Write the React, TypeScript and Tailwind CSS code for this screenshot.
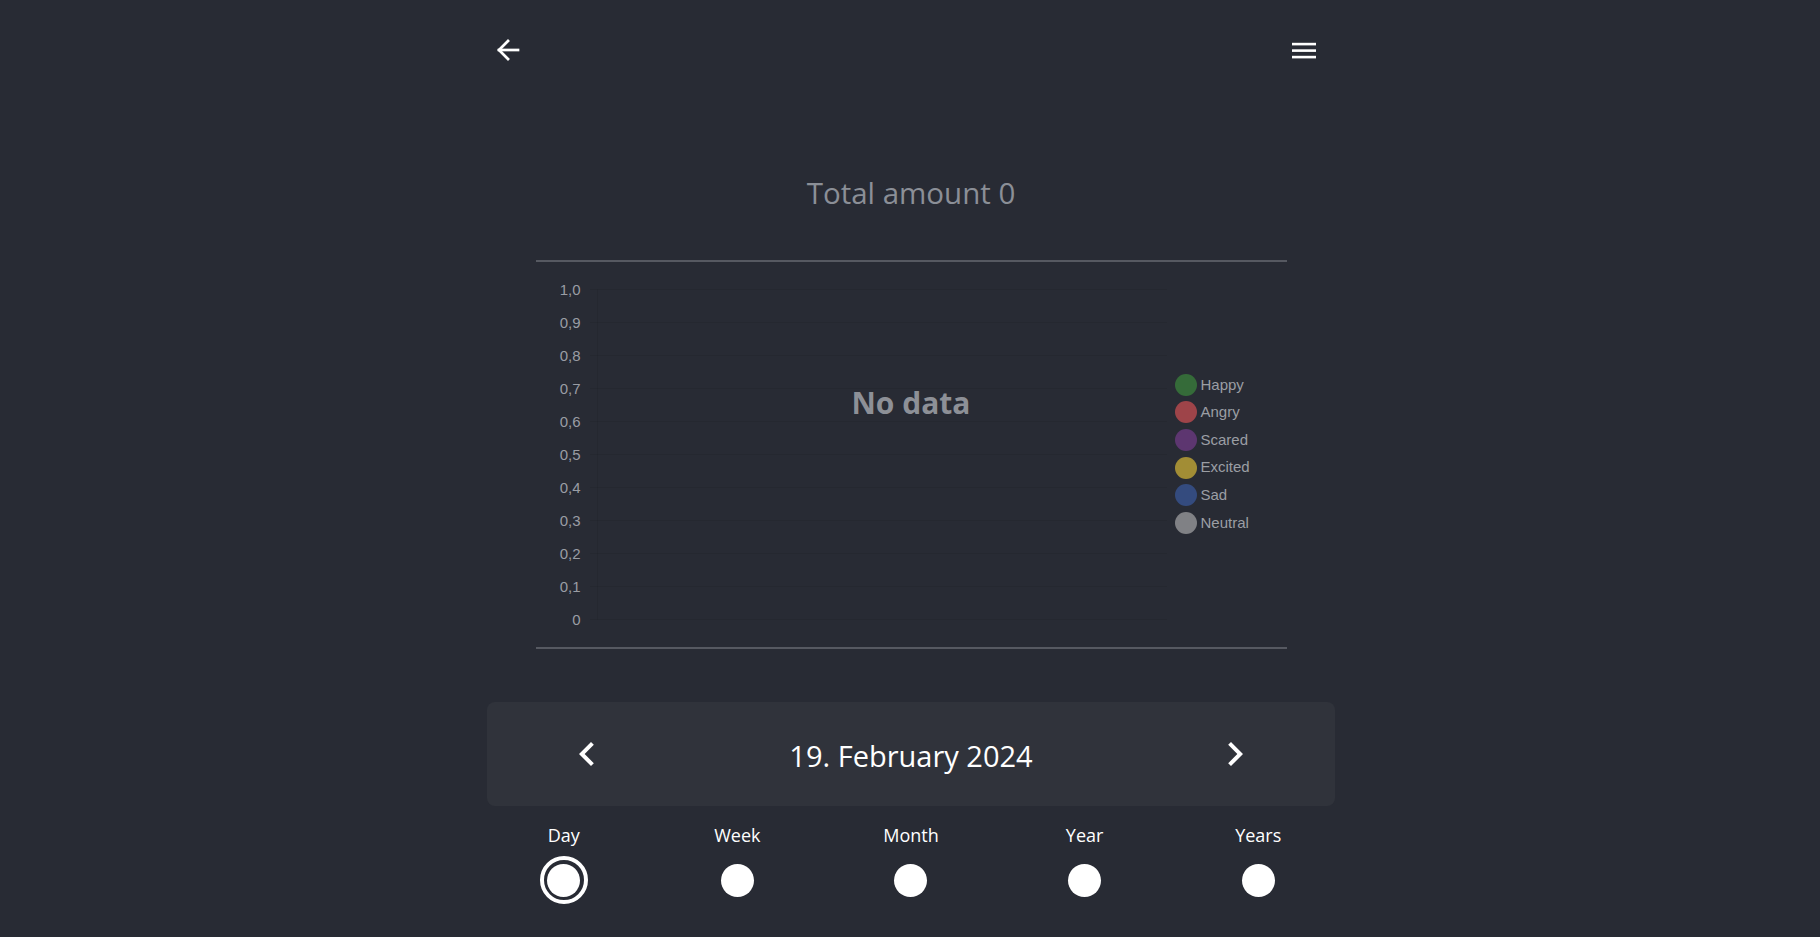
import React from "react";
import { MdChevronLeft, MdChevronRight } from "react-icons/md";

const yLabels = ["1,0", "0,9", "0,8", "0,7", "0,6", "0,5", "0,4", "0,3", "0,2", "0,1", "0"];
const legend = [
  { name: "Happy", color: "#356b39" },
  { name: "Angry", color: "#9e4449" },
  { name: "Scared", color: "#5d3670" },
  { name: "Excited", color: "#a28d35" },
  { name: "Sad", color: "#344b7e" },
  { name: "Neutral", color: "#808185" },
];
const periods = ["Day", "Week", "Month", "Year", "Years"];

export default function App() {
  return (
    <div className="min-h-screen bg-[#282b34] pl-[2px] font-['Open_Sans','Noto_Sans',sans-serif]">
      <div className="w-[848px] mx-auto">
        <header className="h-[100px] flex items-center justify-between">
          <button className="ml-[9px] text-white" aria-label="back">
            <svg width="24" height="22" viewBox="0 0 24 22" fill="none" stroke="white" strokeWidth="2.7" strokeLinecap="square">
              <path d="M22 11H3" />
              <path d="M12 2L3 11L12 20" strokeLinejoin="miter" />
            </svg>
          </button>
          <button className="mr-[19px]" aria-label="menu">
            <svg width="24" height="18" viewBox="0 0 24 18" fill="white">
              <rect x="0" y="1.8" width="24" height="2.6" />
              <rect x="0" y="8.3" width="24" height="2.6" />
              <rect x="0" y="14.8" width="24" height="2.6" />
            </svg>
          </button>
        </header>

        <h1 className="mt-[73px] text-center text-[29.5px] leading-[40px] text-[#8b8f97]">Total amount 0</h1>

        <div className="relative mx-auto mt-[47px] w-[751px] h-[389px] border-y-2 border-[#565961] flex font-['Liberation_Sans',Arial,sans-serif]">
          <div className="w-[45px] pt-[11px] flex flex-col items-end">
            {yLabels.map((l) => (
              <div key={l} className="h-[33px] leading-[33px] text-[15px] text-[#9a9da4]">
                {l}
              </div>
            ))}
          </div>
          <div className="ml-[9px] w-[577px]">
            <svg width="577" height="385" viewBox="0 0 577 385">
              {yLabels.map((_, k) => (
                <line key={k} x1="0" x2="577" y1={27.5 + 33 * k} y2={27.5 + 33 * k} stroke="rgba(0,0,0,0.06)" strokeWidth="1" />
              ))}
              <line x1="7.5" x2="7.5" y1="27.5" y2="357.5" stroke="rgba(0,0,0,0.06)" strokeWidth="1" />
            </svg>
          </div>
          <div className="ml-[8px] pt-[109px] flex flex-col">
            {legend.map((item) => (
              <div key={item.name} className="h-[27.6px] flex items-center">
                <span className="w-[22px] h-[22px] rounded-full" style={{ backgroundColor: item.color }} />
                <span className="ml-[4px] text-[15px] text-[#9b9ea4]">{item.name}</span>
              </div>
            ))}
          </div>
          <div className="absolute left-0 right-0 top-[121px] text-center font-['Open_Sans','Noto_Sans',sans-serif] font-bold text-[30px] leading-[40px] text-[#8d9097]">
            No data
          </div>
        </div>

        <div className="mt-[53px] h-[104px] rounded-lg bg-[#30333b] flex items-center justify-between px-[76px]">
          <button aria-label="previous" className="text-white">
            <MdChevronLeft size={48} />
          </button>
          <div className="pt-[4px] text-white text-[29px] leading-[40px]">19. February 2024</div>
          <button aria-label="next" className="text-white">
            <MdChevronRight size={48} />
          </button>
        </div>

        <div className="-mx-[10px] mt-[17px] grid grid-cols-5">
          {periods.map((p, i) => (
            <div key={p} className="flex flex-col items-center">
              <div className="text-white text-[18px] leading-[24px]">{p}</div>
              <div className="mt-[9px] h-[48px] flex items-center justify-center">
                {i === 0 ? (
                  <div className="w-[48px] h-[48px] rounded-full border-[4px] border-white flex items-center justify-center">
                    <div className="w-[33px] h-[33px] rounded-full bg-white" />
                  </div>
                ) : (
                  <div className="w-[33px] h-[33px] rounded-full bg-white" />
                )}
              </div>
            </div>
          ))}
        </div>
      </div>
    </div>
  );
}
